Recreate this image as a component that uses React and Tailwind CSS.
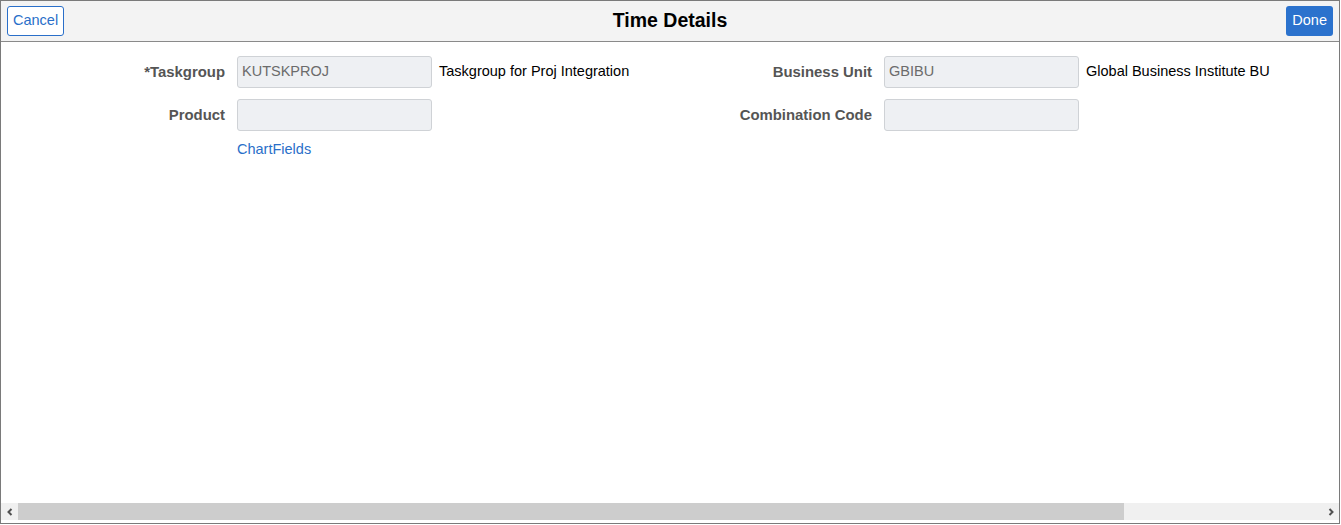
import React from "react";

const font = { fontFamily: '"Liberation Sans", Arial, sans-serif' };

function Field({ label, value, desc, labelWidth }) {
  return (
    <div className="flex items-center h-8">
      <div
        className={`${labelWidth} text-right text-[14.9px] font-bold text-[#555555] pr-3`}
      >
        {label}
      </div>
      <div className="w-[195px] h-8 rounded-[3px] border border-[#cfd2d6] bg-[#eef0f3] px-1 flex items-center text-[14.5px] text-[#6b6b6b]">
        {value}
      </div>
      {desc && <div className="ml-[7px] text-[14.5px] text-black">{desc}</div>}
    </div>
  );
}

function ScrollBar() {
  return (
    <div className="flex h-[17px] mb-[3px] bg-[#f0f0f0]">
      <div className="w-[17px] flex items-center justify-center">
        <svg width="8" height="8" viewBox="0 0 8 8">
          <path d="M5.5 1 L2.5 4 L5.5 7" fill="none" stroke="#505050" strokeWidth="2" />
        </svg>
      </div>
      <div className="w-[1106px] bg-[#cdcdcd]" />
      <div className="flex-1" />
      <div className="w-[17px] flex items-center justify-center">
        <svg width="8" height="8" viewBox="0 0 8 8">
          <path d="M2.5 1 L5.5 4 L2.5 7" fill="none" stroke="#505050" strokeWidth="2" />
        </svg>
      </div>
    </div>
  );
}

export default function App() {
  return (
    <div className="bg-white w-[1341px] h-[525px]" style={font}>
      <div className="w-[1340px] h-[524px] border border-[#7a7a7a] flex flex-col bg-white">
        {/* header */}
        <div className="h-[41px] shrink-0 bg-[#f3f3f3] border-b border-[#8a8a8a] flex items-center justify-between px-[6px] relative">
          <button className="h-[30px] px-[5px] rounded-[3px] border border-[#2a6fc9] bg-white text-[14.5px] text-[#2a6fc9]">
            Cancel
          </button>
          <h1 className="absolute left-0 right-0 text-center text-[19.5px] font-bold text-black pointer-events-none">
            Time Details
          </h1>
          <button className="h-[30px] px-[6px] rounded-[3px] bg-[#2b72cd] text-[14.5px] text-white">
            Done
          </button>
        </div>

        {/* body */}
        <div className="flex-1 flex pt-[14px]">
          <div className="w-[699px] flex flex-col gap-[11px]">
            <Field
              label="*Taskgroup"
              value="KUTSKPROJ"
              desc="Taskgroup for Proj Integration"
              labelWidth="w-[236px]"
            />
            <Field label="Product" value="" labelWidth="w-[236px]" />
            <div className="pl-[236px] -mt-[5px]">
              <a href="#" className="text-[14.5px] text-[#2a6fc9]">
                ChartFields
              </a>
            </div>
          </div>
          <div className="flex flex-col gap-[11px]">
            <Field
              label="Business Unit"
              value="GBIBU"
              desc="Global Business Institute BU"
              labelWidth="w-[184px]"
            />
            <Field label="Combination Code" value="" labelWidth="w-[184px]" />
          </div>
        </div>

        <ScrollBar />
      </div>
    </div>
  );
}
